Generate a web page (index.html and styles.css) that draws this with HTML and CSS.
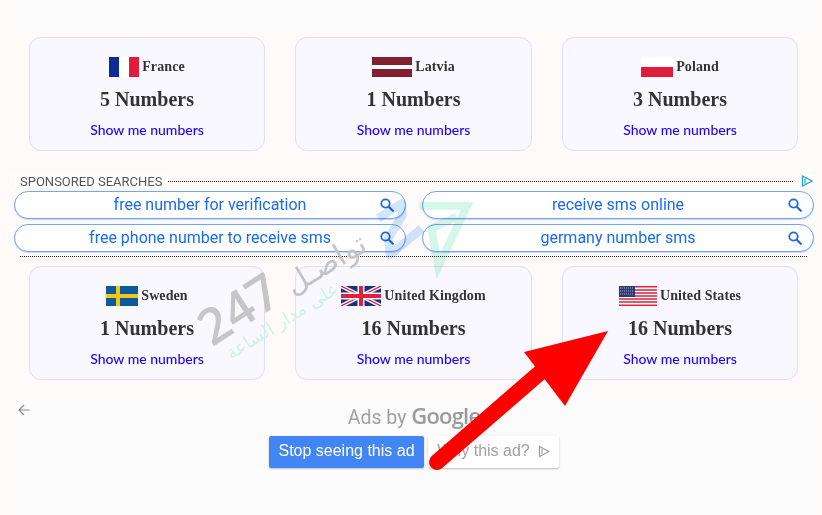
FILE: index.html
```html
<!DOCTYPE html>
<html lang="en">
<head>
    <meta charset="UTF-8">
    <title>Numbers</title>
    <link rel="stylesheet" href="styles.css">
</head>
<body>
<div class="top-band"></div>

<div class="cards">
    <div class="card">
        <div class="country">
            <svg class="flag" width="30" height="20" viewBox="0 0 3 2"><rect width="1" height="2" fill="#0d2a9a"/><rect x="1" width="1" height="2" fill="#fff"/><rect x="2" width="1" height="2" fill="#e21c3c"/></svg>
            France
        </div>
        <div class="count">5 Numbers</div>
        <a class="show" href="#">Show me numbers</a>
    </div>
    <div class="card">
        <div class="country">
            <svg class="flag" width="40" height="20" viewBox="0 0 40 20"><rect width="40" height="20" fill="#82212d"/><rect y="8" width="40" height="4" fill="#fff"/></svg>
            Latvia
        </div>
        <div class="count">1 Numbers</div>
        <a class="show" href="#">Show me numbers</a>
    </div>
    <div class="card">
        <div class="country">
            <svg class="flag" width="32" height="20" viewBox="0 0 32 20"><rect width="32" height="10" fill="#fff"/><rect y="10" width="32" height="10" fill="#e01c3c"/></svg>
            Poland
        </div>
        <div class="count">3 Numbers</div>
        <a class="show" href="#">Show me numbers</a>
    </div>
</div>

<div class="ad">
    <div class="ad-head">
        <span class="ad-label">SPONSORED SEARCHES</span>
        <span class="dots"></span>
        <svg class="ad-choice" width="14" height="14" viewBox="0 0 14 14"><path d="M2.500 2v10L12 7z M5 4.500v5" fill="none" stroke="#23a3dd" stroke-width="1.300"/></svg>
    </div>
    <div class="pills">
        <a class="pill" href="#">free number for verification<svg class="lens" width="14" height="14" viewBox="0 0 14 14"><circle cx="5.500" cy="5.500" r="4.200" fill="none" stroke="#1a66e8" stroke-width="1.800"/><path d="M8.500 8.500l5 5" stroke="#1a66e8" stroke-width="2"/></svg></a>
        <a class="pill" href="#">receive sms online<svg class="lens" width="14" height="14" viewBox="0 0 14 14"><circle cx="5.500" cy="5.500" r="4.200" fill="none" stroke="#1a66e8" stroke-width="1.800"/><path d="M8.500 8.500l5 5" stroke="#1a66e8" stroke-width="2"/></svg></a>
        <a class="pill" href="#">free phone number to receive sms<svg class="lens" width="14" height="14" viewBox="0 0 14 14"><circle cx="5.500" cy="5.500" r="4.200" fill="none" stroke="#1a66e8" stroke-width="1.800"/><path d="M8.500 8.500l5 5" stroke="#1a66e8" stroke-width="2"/></svg></a>
        <a class="pill" href="#">germany number sms<svg class="lens" width="14" height="14" viewBox="0 0 14 14"><circle cx="5.500" cy="5.500" r="4.200" fill="none" stroke="#1a66e8" stroke-width="1.800"/><path d="M8.500 8.500l5 5" stroke="#1a66e8" stroke-width="2"/></svg></a>
    </div>
    <div class="dots dots-bottom"></div>
</div>

<div class="cards cards-second">
    <div class="card">
        <div class="country">
            <svg class="flag" width="32" height="20" viewBox="0 0 32 20"><rect width="32" height="20" fill="#0b5a9c"/><rect x="10" width="4" height="20" fill="#f5c518"/><rect y="8" width="32" height="4" fill="#f5c518"/></svg>
            Sweden
        </div>
        <div class="count">1 Numbers</div>
        <a class="show" href="#">Show me numbers</a>
    </div>
    <div class="card">
        <div class="country">
            <svg class="flag" width="40" height="20" viewBox="0 0 40 20"><rect width="40" height="20" fill="#1a2f8a"/><path d="M0 0l40 20M40 0L0 20" stroke="#fff" stroke-width="4"/><path d="M0 0l40 20M40 0L0 20" stroke="#e0213c" stroke-width="1.300"/><path d="M20 0v20M0 10h40" stroke="#fff" stroke-width="7"/><path d="M20 0v20M0 10h40" stroke="#e0213c" stroke-width="4"/></svg>
            United Kingdom
        </div>
        <div class="count">16 Numbers</div>
        <a class="show" href="#">Show me numbers</a>
    </div>
    <div class="card">
        <div class="country">
            <svg class="flag" width="38" height="20" viewBox="0 0 38 20"><rect width="38" height="20" fill="#fff"/><path d="M0 .8h38M0 3.900h38M0 7h38M0 10h38M0 13h38M0 16.100h38M0 19.200h38" stroke="#d9233f" stroke-width="1.500"/><rect width="16" height="11" fill="#2d3a78"/><path d="M1 2h14M1 5h14M1 8h14" stroke="#aeb4d0" stroke-width="1" stroke-dasharray="1 1"/></svg>
            United States
        </div>
        <div class="count">16 Numbers</div>
        <a class="show" href="#">Show me numbers</a>
    </div>
</div>

<div class="ad-foot">
    <svg class="back" width="12" height="12" viewBox="0 0 12 12"><path d="M6 1L1 6l5 5M1 6h10.500" fill="none" stroke="#8a8a8a" stroke-width="1.200"/></svg>
    <div class="ads-by">Ads by <span class="google">Google</span></div>
    <div class="ad-buttons">
        <a class="stop" href="#">Stop seeing this ad</a>
        <a class="why" href="#">Why this ad?<svg class="why-icon" width="12" height="13" viewBox="0 0 12 13"><path d="M1.500 1.500v10L11 6.500z M4 4v5" fill="none" stroke="#9a9a9a" stroke-width="1.100"/></svg></a>
    </div>
</div>

<!-- watermark and arrow lie over the page -->
<svg class="wm-logo" width="120" height="100" viewBox="0 0 360 300">
    <path d="M55 100L125 55L127 92L85 160L90 210L185 130" fill="none" stroke="#cfe6fb" stroke-width="26" stroke-linejoin="round"/>
    <path d="M178 62L322 62L235 245L215 130L290 95" fill="none" stroke="#d5f7e8" stroke-width="24"/>
</svg>
<div class="wm-247">247</div>
<div class="wm-ar" dir="rtl" lang="ar">تواصـل</div>
<div class="wm-ar-small" dir="rtl" lang="ar">على مدار الساعة</div>

<svg class="arrow" width="822" height="515" viewBox="0 0 822 515">
    <path d="M437 462L550 364" stroke="#fe0000" stroke-width="16" stroke-linecap="round"/>
    <polygon points="608,331 524,352 565,406" fill="#fe0000"/>
</svg>
</body>
</html>
```
FILE: styles.css
```css
*{
    box-sizing: border-box;
}
body{
    margin: 0;
    width: 822px;
    height: 515px;
    overflow: hidden;
    position: relative;
    background-color: #fffafa;
}
a{
    text-decoration: none;
}
.top-band{
    height: 32px;
    margin: 0 8px 0 14px;
    background-color: #fbfbfb;
}
.cards{
    display: grid;
    grid-template-columns: 236px 237px 236px;
    column-gap: 30px;
    margin: 5px 0 0 29px;
}
.cards-second{
    margin-top: 9px;
}
.card{
    height: 114px;
    padding-top: 19px;
    background-color: #f9f8ff;
    border: 1px solid #e0dcff;
    border-radius: 12px;
    text-align: center;
}
.country{
    display: flex;
    justify-content: center;
    align-items: flex-start;
    gap: 3px;
    height: 20px;
    font: bold 14px/19px "Liberation Serif", serif;
    letter-spacing: 0.1px;
    color: #333;
}
.count{
    margin-top: 6px;
    font: bold 20px/32px "Liberation Serif", serif;
    color: #333;
}
.show{
    display: block;
    margin-top: 5px;
    font: 500 14px/20px Lato, sans-serif;
    color: #2200ff;
}
.ad{
    margin: 21px 8px 0 14px;
}
.ad-head{
    display: flex;
    align-items: center;
    height: 18px;
}
.ad-label{
    padding: 0 6px;
    background-color: #fff;
    font: 13px/15px Roboto, sans-serif;
    color: #555;
}
.dots{
    flex: 1;
    border-top: 1px dotted #222;
}
.ad-choice{
    margin-left: 7px;
    background-color: #fff;
}
.pills{
    display: grid;
    grid-template-columns: 392px 392px;
    column-gap: 16px;
    row-gap: 5px;
    margin-top: 1px;
}
.pill{
    position: relative;
    height: 28px;
    background-color: #fff;
    border: 1px solid #74a5f5;
    border-radius: 14px;
    box-shadow: 0 1px 1px #c4d8fa;
    text-align: center;
    font: 16px/25px Roboto, sans-serif;
    color: #1a6bf0;
}
.lens{
    position: absolute;
    right: 11px;
    top: 6px;
}
.dots-bottom{
    margin: 4px 7px 0 6px;
}
.ad-foot{
    height: 115px;
    margin: 20px 8px 0 14px;
    padding-top: 4px;
    background-color: #fbfbfb;
    text-align: center;
}
.back{
    display: block;
    margin: 0 0 0 4px;
}
.ads-by{
    margin-top: -13px;
    font: 19.500px/24px Roboto, sans-serif;
    color: #a0a0a0;
}
.google{
    font: 600 22px/24px "Open Sans", sans-serif;
    letter-spacing: -0.800px;
    color: #9a9a9a;
}
.ad-buttons{
    display: flex;
    justify-content: center;
    gap: 4px;
    margin-top: 6px;
}
.stop, .why{
    height: 32px;
    border-radius: 2px;
    box-shadow: 0 1px 2px #bbb;
    font: 16px/30px "Liberation Sans", sans-serif;
}
.stop{
    width: 155px;
    background-color: #4285f4;
    color: #fff;
}
.why{
    width: 131px;
    background-color: #fff;
    color: #a0a0a0;
}
.why-icon{
    margin-left: 8px;
    vertical-align: -2px;
}
.wm-logo{
    position: absolute;
    left: 360px;
    top: 185px;
    mix-blend-mode: multiply;
}
.wm-247{
    position: absolute;
    left: 195px;
    top: 283px;
    font: 600 50px/50px "Open Sans", sans-serif;
    color: #c6c6c6;
    transform: rotate(-33deg);
}
.wm-ar{
    position: absolute;
    left: 281px;
    top: 239px;
    font: 30px/50px "DejaVu Sans", sans-serif;
    color: #c4c4c4;
    transform: rotate(-31deg);
}
.wm-ar-small{
    position: absolute;
    left: 218px;
    top: 311px;
    font: 18px/20px "DejaVu Sans", sans-serif;
    color: #cdf4e1;
    transform: rotate(-32deg);
}
.arrow{
    position: absolute;
    left: 0;
    top: 0;
    pointer-events: none;
}
```
